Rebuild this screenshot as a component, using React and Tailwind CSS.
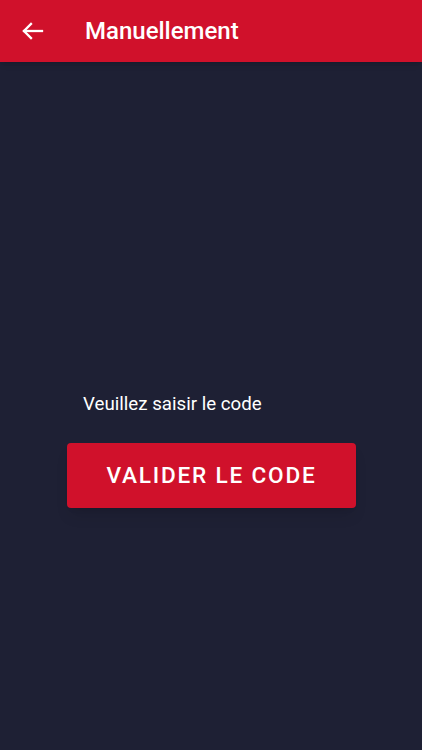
export default function App() {
	return (
		<div className="min-h-[750px] w-full bg-[#1e2034] flex flex-col font-['Roboto',sans-serif]">
			<header className="h-[62px] bg-[#d0112b] flex items-center shadow-md">
				<button className="w-[68px] h-full flex items-center pl-[22px] text-white">
					{/* back arrow */}
					<svg width="22" height="18" viewBox="0 0 22 18" fill="none" stroke="currentColor" strokeWidth="2.3" strokeLinecap="square">
						<path d="M2 9H20" />
						<path d="M9 2L2 9L9 16" />
					</svg>
				</button>
				<h1 className="ml-[17px] text-white text-[24px] font-medium">Manuellement</h1>
			</header>
			<main className="flex flex-col pt-[330px] px-[67px]">
				<p className="pl-[16px] text-white text-[18.7px] leading-[24px]">Veuillez saisir le code</p>
				<button className="mt-[27px] h-[65px] w-[289px] rounded-[4px] bg-[#d0112b] shadow-lg text-white text-[22.6px] font-medium tracking-[0.08em]">
					VALIDER LE CODE
				</button>
			</main>
		</div>
	);
}
